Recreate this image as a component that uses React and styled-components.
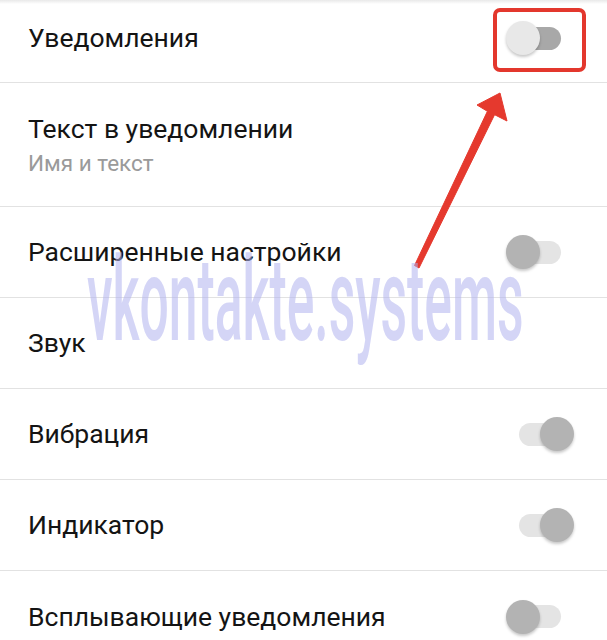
import * as React from "react";
import styled, { createGlobalStyle } from "styled-components";

const GlobalStyle = createGlobalStyle`
  html, body {
    margin: 0;
    padding: 0;
    background: #ffffff;
  }
  body {
    font-family: Roboto, "Noto Sans", "DejaVu Sans", sans-serif;
  }
`;

const Screen = styled.div`
  position: relative;
  width: 607px;
  height: 640px;
  overflow: hidden;
  background: #ffffff;
`;

const TopShade = styled.div`
  height: 4px;
  background: linear-gradient(#e9e9e9, #ffffff);
`;

const SettingsList = styled.ul`
  list-style: none;
  margin: 0;
  padding: 0;
`;

const Row = styled.li`
  display: flex;
  align-items: center;
  justify-content: space-between;
  box-sizing: border-box;
  min-height: ${(p) => p.$height}px;
  padding: 0 33px ${(p) => p.$lift || 0}px 28px;
  border-bottom: 1.5px solid #e2e2e2;

  &:last-child {
    border-bottom: none;
  }
`;

const Labels = styled.div`
  display: flex;
  flex-direction: column;
  gap: 4px;
`;

const Title = styled.div`
  font-size: 26.5px;
  line-height: 32px;
  color: #141414;
`;

const Subtitle = styled.div`
  font-size: 22.5px;
  line-height: 28px;
  color: #9a9a9a;
`;

const Switch = styled.div`
  position: relative;
  flex: none;
  display: flex;
  align-items: center;
  height: 34px;
  padding: 0 13px;
`;

const Track = styled.div`
  display: flex;
  align-items: center;
  justify-content: ${(p) => (p.$on ? "flex-end" : "flex-start")};
  width: 42px;
  height: 23px;
  border-radius: 12px;
  background: ${(p) => (p.$active ? "#a8a8a8" : "#e4e4e4")};
`;

const Thumb = styled.div`
  flex: none;
  width: 34px;
  height: 34px;
  margin: 0 -13px;
  border-radius: 50%;
  background: ${(p) => (p.$active ? "#e8e8e8" : "#b3b3b3")};
  box-shadow: 0 2px 3px rgba(0, 0, 0, 0.22);
`;

const Highlight = styled.div`
  position: absolute;
  left: -13px;
  top: -13px;
  width: 93px;
  height: 64px;
  box-sizing: border-box;
  border: 4.5px solid #e3372d;
  border-radius: 7px;
`;

const Arrow = styled.svg`
  position: absolute;
  left: 0;
  top: 0;
  pointer-events: none;
`;

const Watermark = styled.div`
  position: absolute;
  left: 87px;
  top: 271px;
  font-family: Roboto, "DejaVu Sans", sans-serif;
  font-size: 116px;
  font-weight: 500;
  line-height: 0.5;
  color: rgba(176, 178, 238, 0.55);
  white-space: nowrap;
  transform: scaleX(0.445);
  transform-origin: left top;
  pointer-events: none;
`;

const settings = [
  { title: "Уведомления", height: 79, lift: 10, toggle: { on: false, active: true }, marked: true },
  { title: "Текст в уведомлении", subtitle: "Имя и текст", height: 124 },
  { title: "Расширенные настройки", height: 91, toggle: { on: false } },
  { title: "Звук", height: 91 },
  { title: "Вибрация", height: 91, toggle: { on: true } },
  { title: "Индикатор", height: 91, toggle: { on: true } },
  { title: "Всплывающие уведомления", height: 91, toggle: { on: false } },
];

function Toggle({ on, active, marked }) {
  return (
    <Switch>
      <Track $on={on} $active={active}>
        <Thumb $active={active} />
      </Track>
      {marked && <Highlight />}
    </Switch>
  );
}

export default function App() {
  return (
    <Screen>
      <GlobalStyle />
      <TopShade />
      <SettingsList>
        {settings.map((item) => (
          <Row key={item.title} $height={item.height} $lift={item.lift}>
            <Labels>
              <Title>{item.title}</Title>
              {item.subtitle && <Subtitle>{item.subtitle}</Subtitle>}
            </Labels>
            {item.toggle && <Toggle {...item.toggle} marked={item.marked} />}
          </Row>
        ))}
      </SettingsList>
      <Arrow width="607" height="640" viewBox="0 0 607 640">
        <polygon
          points="500,93 507,121 494.6,114.7 419,268 414.5,265.5 487.4,111.3 477,105"
          fill="#e5392e"
          stroke="#e5392e"
          strokeWidth="1"
          strokeLinejoin="round"
        />
      </Arrow>
      <Watermark>vkontakte.systems</Watermark>
    </Screen>
  );
}
